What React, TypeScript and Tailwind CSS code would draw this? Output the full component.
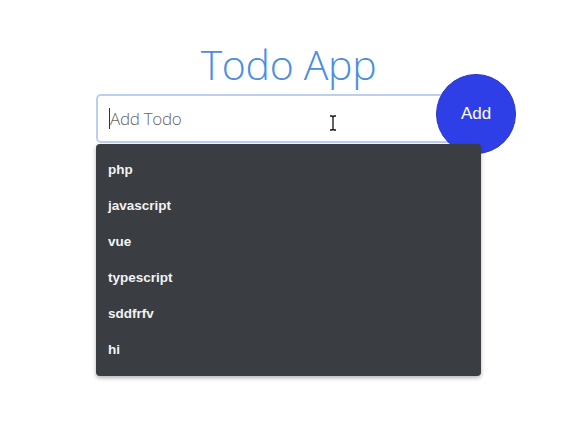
import { useState } from "react";

const items = ["php", "javascript", "vue", "typescript", "sddfrfv", "hi"];

const App = () => {
    const [todo, setTodo] = useState("");

    return (
        <div className="w-[588px] h-[438px] bg-white overflow-hidden font-['Open_Sans',sans-serif]">
            <div className="ml-[96px] w-[385px] pt-[36px]">
                <h1 className="text-center text-[41px] leading-[56px] font-light text-[#4a8ee0] tracking-[-0.3px]">
                    Todo App
                </h1>
                <div className="relative mt-[2px]">
                    <div className="h-[49px] rounded-[5px] border-2 border-[#b9d0f0] bg-white flex items-center pl-[11px]">
                        <span className="w-px h-[21px] bg-[#333]" />
                        <input
                            value={todo}
                            onChange={(e) => setTodo(e.target.value)}
                            placeholder="Add Todo"
                            className="flex-1 bg-transparent outline-none text-[17px] font-light text-[#444] placeholder:text-[#666] tracking-[-0.3px]"
                        />
                    </div>
                    <svg className="absolute left-[233px] top-[21px]" width="8" height="16" viewBox="0 0 8 16">
                        <path d="M1 1h2l1 1 1-1h2M4 2v12M1 15h2l1-1 1 1h2" fill="none" stroke="#111" strokeWidth="1.3" />
                    </svg>
                    <button className="absolute left-[340px] top-[-20px] w-[80px] h-[80px] rounded-full bg-[#2f3fe8] border border-[#2a36c0] text-white text-[17px] font-['Liberation_Sans',sans-serif] flex items-center justify-center">
                        Add
                    </button>
                    <ul className="relative z-10 mt-px bg-[#3a3d41] rounded-[4px] py-2 shadow-[0_2px_4px_rgba(0,0,0,0.3)] font-['Liberation_Sans',sans-serif]">
                        {items.map((item) => (
                            <li key={item} className="h-9 flex items-center pl-[12px] text-[13.5px] font-bold text-[#f3f3f3]">
                                {item}
                            </li>
                        ))}
                    </ul>
                </div>
            </div>
        </div>
    );
};

export default App;
